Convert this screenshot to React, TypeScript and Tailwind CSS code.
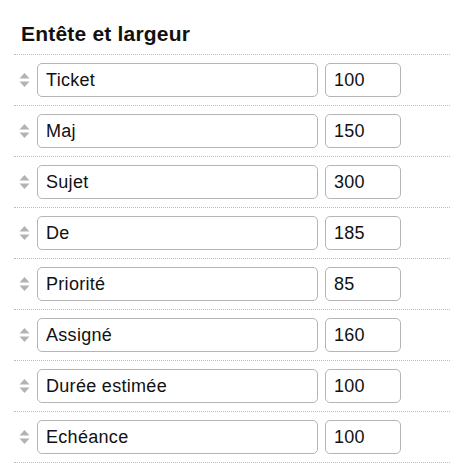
import React from 'react';

interface Column {
  label: string;
  width: number;
}

const columns: Column[] = [
  { label: 'Ticket', width: 100 },
  { label: 'Maj', width: 150 },
  { label: 'Sujet', width: 300 },
  { label: 'De', width: 185 },
  { label: 'Priorité', width: 85 },
  { label: 'Assigné', width: 160 },
  { label: 'Durée estimée', width: 100 },
  { label: 'Echéance', width: 100 },
];

const SortHandle: React.FC = () => (
  <svg width="11" height="16" viewBox="0 0 11 16" className="shrink-0">
    <path d="M5.5 1 L10.5 6.5 L0.5 6.5 Z" fill="#b3b3b3" />
    <path d="M5.5 15 L10.5 9.5 L0.5 9.5 Z" fill="#b3b3b3" />
  </svg>
);

const App: React.FC = () => {
  return (
    <div className="min-h-[467px] bg-white pl-[14px] pt-[23px] font-['Helvetica','Liberation_Sans',Arial,sans-serif] text-[#111]">
      <h2 className="m-0 mb-[10px] pl-[7px] text-[21px] font-bold leading-[21px] tracking-[0.2px]">Entête et largeur</h2>
      <ul className="border-b border-dotted border-[#bdbdbd]">
        {columns.map((col) => (
          <li
            key={col.label}
            className="flex h-[51px] items-center border-t border-dotted border-[#bdbdbd] pl-[5px]"
          >
            <SortHandle />
            <input
              type="text"
              defaultValue={col.label}
              className="ml-[7px] h-[34px] w-[281px] rounded-[5px] border border-[#b5b5b5] bg-white px-[8px] text-[18px] tracking-[0.3px] text-[#111] outline-none"
            />
            <input
              type="text"
              defaultValue={col.width}
              className="ml-[7px] h-[34px] w-[76px] rounded-[5px] border border-[#b5b5b5] bg-white px-[8px] text-[18px] tracking-[0.3px] text-[#111] outline-none"
            />
          </li>
        ))}
      </ul>
    </div>
  );
};

export default App;
